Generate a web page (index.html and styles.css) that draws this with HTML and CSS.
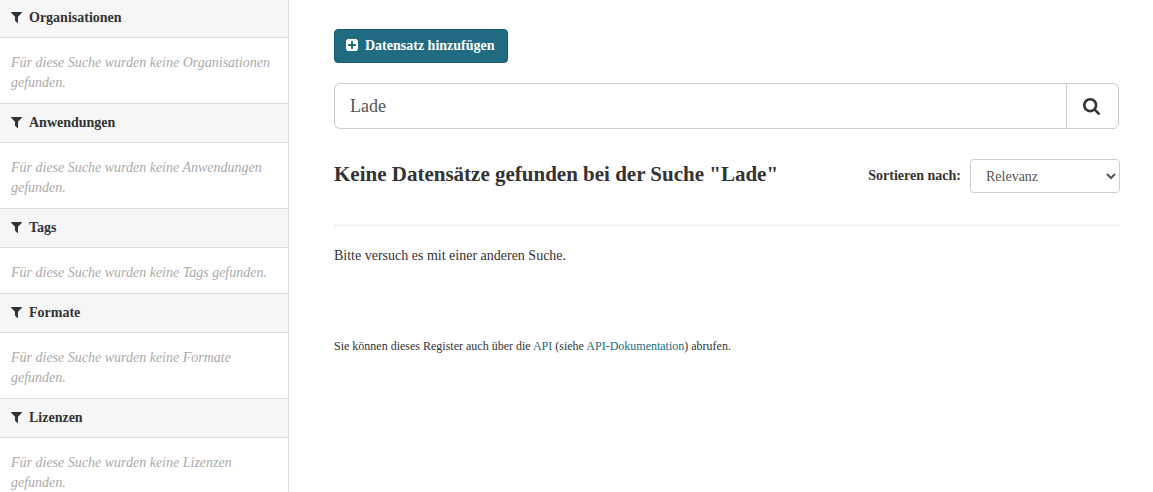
FILE: index.html
```html
<!DOCTYPE html>
<html lang="de">
<head>
<meta charset="utf-8">
<meta name="viewport" content="width=device-width, initial-scale=1">
<title>Datensätze</title>
<link rel="stylesheet" href="styles.css">
</head>
<body>
<svg class="sprite" aria-hidden="true">
  <symbol id="filter" viewBox="192 256 1408 1664"><path d="M1595 295q17 41-14 70l-493 493v742q0 42-39 59-13 5-25 5-27 0-45-19l-256-256q-19-19-19-45v-486l-493-493q-31-29-14-70 17-39 59-39h1280q42 0 59 39z"/></symbol>
</svg>
<div class="page">
  <aside class="sidebar">
    <section class="facet">
      <h2 class="facet-title"><svg class="icon-filter"><use href="#filter"/></svg>Organisationen</h2>
      <p class="facet-empty">Für diese Suche wurden keine Organisationen gefunden.</p>
    </section>
    <section class="facet">
      <h2 class="facet-title"><svg class="icon-filter"><use href="#filter"/></svg>Anwendungen</h2>
      <p class="facet-empty">Für diese Suche wurden keine Anwendungen gefunden.</p>
    </section>
    <section class="facet">
      <h2 class="facet-title"><svg class="icon-filter"><use href="#filter"/></svg>Tags</h2>
      <p class="facet-empty">Für diese Suche wurden keine Tags gefunden.</p>
    </section>
    <section class="facet">
      <h2 class="facet-title"><svg class="icon-filter"><use href="#filter"/></svg>Formate</h2>
      <p class="facet-empty">Für diese Suche wurden keine Formate gefunden.</p>
    </section>
    <section class="facet">
      <h2 class="facet-title"><svg class="icon-filter"><use href="#filter"/></svg>Lizenzen</h2>
      <p class="facet-empty">Für diese Suche wurden keine Lizenzen gefunden.</p>
    </section>
  </aside>
  <main class="content">
    <button class="add-button" type="button">
      <svg class="icon-plus" viewBox="128 128 1536 1792" aria-hidden="true"><path d="M1408 960v-128q0-26-19-45t-45-19h-320v-320q0-26-19-45t-45-19h-128q-26 0-45 19t-19 45v320h-320q-26 0-45 19t-19 45v128q0 26 19 45t45 19h320v320q0 26 19 45t45 19h128q26 0 45-19t19-45v-320h320q26 0 45-19t19-45zm256-544v960q0 119-84.500 203.500t-203.500 84.500h-960q-119 0-203.500-84.500t-84.500-203.500v-960q0-119 84.500-203.500t203.500-84.500h960q119 0 203.500 84.500t84.500 203.500z"/></svg>
      Datensatz hinzufügen
    </button>
    <form class="search">
      <input class="search-input" type="text" value="Lade" aria-label="Datensätze suchen">
      <button class="search-button" type="button" aria-label="Suche">
        <svg class="icon-search" viewBox="64 128 1664 1664" aria-hidden="true"><path d="M1216 832q0-185-131.500-316.500t-316.500-131.500-316.500 131.500-131.500 316.500 131.500 316.500 316.500 131.500 316.500-131.500 131.500-316.500zm512 832q0 52-38 90t-90 38q-54 0-90-38l-343-342q-179 124-399 124-143 0-273.500-55.500t-225-150-150-225-55.500-273.500 55.500-273.500 150-225 225-150 273.500-55.500 273.500 55.500 225 150 150 225 55.500 273.500q0 220-124 399l343 343q37 37 37 90z"/></svg>
      </button>
    </form>
    <div class="result-bar">
      <h1 class="result-title">Keine Datensätze gefunden bei der Suche "Lade"</h1>
      <div class="sort">
        <label class="sort-label" for="sort">Sortieren nach:</label>
        <select class="sort-select" id="sort"><option>Relevanz</option></select>
      </div>
    </div>
    <p class="hint">Bitte versuch es mit einer anderen Suche.</p>
    <p class="api-note">Sie können dieses Register auch über die <a href="#api">API</a> (siehe <a href="#docs">API-Dokumentation</a>) abrufen.</p>
  </main>
</div>
</body>
</html>
```
FILE: styles.css
```css
*,
*::before,
*::after {
  box-sizing: border-box;
}

body {
  margin: 0;
  overflow: hidden;
  background: #fff;
  color: #333;
  font: 14px/20px "Liberation Serif", "Times New Roman", serif;
}

button,
input,
select {
  font: inherit;
}

svg {
  flex: none;
  fill: currentColor;
}

.sprite {
  display: none;
}

.page {
  display: flex;
  height: 100vh;
}

.sidebar {
  flex: none;
  width: 25%;
  min-width: 289px;
  border-right: 1px solid #ddd;
  overflow: hidden;
}

.facet-title {
  display: flex;
  align-items: center;
  gap: 7px;
  margin: 0;
  padding: 9px 11px;
  border: solid #ddd;
  border-width: 1px 0;
  background: #f6f6f6;
  font-size: 14px;
}

.facet:first-child .facet-title {
  padding-top: 8px;
  border-top: 0;
}

.icon-filter {
  width: 11px;
  height: 13px;
}

.facet-empty {
  margin: 0;
  padding: 15px 11px 10px;
  color: #aaa;
  font-style: italic;
}

.content {
  flex: 1;
  min-width: 0;
  padding: 29px 33px 0 45px;
}

.add-button {
  display: flex;
  align-items: center;
  gap: 7px;
  height: 34px;
  padding: 0 12px 0 11px;
  border: 1px solid #165c73;
  border-radius: 4px;
  background: #206b82;
  color: #fff;
  font-weight: bold;
}

.icon-plus {
  width: 12px;
  height: 14px;
}

.search {
  display: flex;
  height: 46px;
  margin: 20px 1px 0 0;
}

.search-input {
  flex: 1;
  min-width: 0;
  padding: 0 15px;
  border: 1px solid #ccc;
  border-right: 0;
  border-radius: 6px 0 0 6px;
  background: #fff;
  color: #555;
  font-size: 18px;
}

.search-button {
  display: flex;
  align-items: center;
  padding: 0 18px 0 16px;
  border: 1px solid #ccc;
  border-radius: 0 6px 6px 0;
  background: #fff;
  color: #333;
}

.icon-search {
  width: 17px;
  height: 17px;
}

.result-bar {
  display: flex;
  justify-content: space-between;
  margin-top: 30px;
  padding-bottom: 32px;
  border-bottom: 1px dotted #ddd;
}

.result-title {
  margin: 0;
  font-size: 21px;
  line-height: 30px;
}

.sort {
  display: flex;
  align-items: center;
  gap: 9px;
}

.sort-label {
  font-weight: bold;
}

.sort-select {
  width: 150px;
  height: 34px;
  padding: 0 0 0 11px;
  border: 1px solid #ccc;
  border-radius: 4px;
  background: #fff;
  color: #555;
}

.hint {
  margin: 20px 0 0;
}

.api-note {
  margin: 70px 0 0;
  font-size: 12px;
}

.api-note a {
  color: #206b82;
  text-decoration: none;
}
```
